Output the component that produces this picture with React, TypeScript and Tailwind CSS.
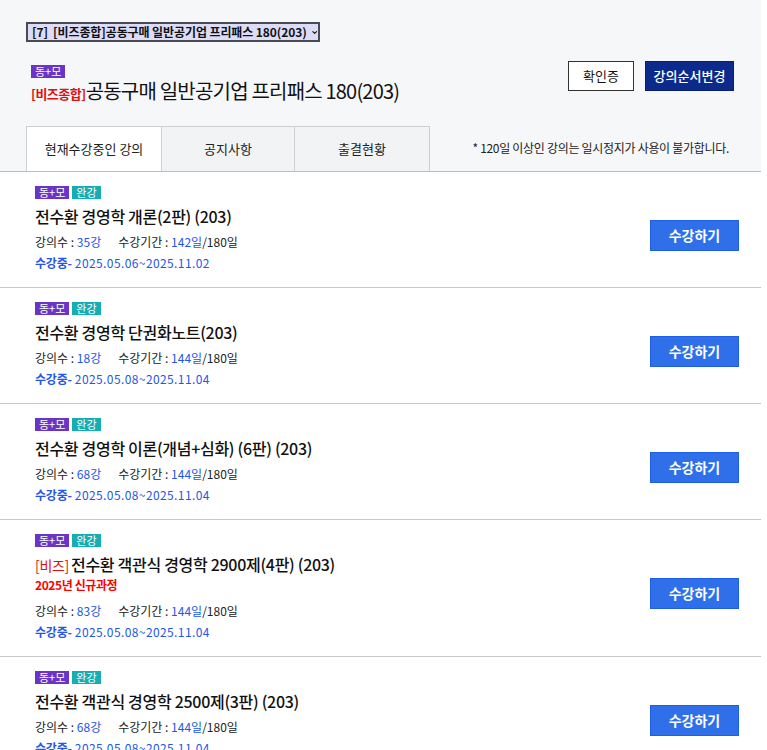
import { ChevronDown } from 'lucide-react'

type Course = {
  prefix?: string
  title: string
  isNew?: boolean
  count: number
  used: number
  start: string
  end: string
}

const COURSES: Course[] = [
  { title: '전수환 경영학 개론(2판) (203)', count: 35, used: 142, start: '2025.05.06', end: '2025.11.02' },
  { title: '전수환 경영학 단권화노트(203)', count: 18, used: 144, start: '2025.05.08', end: '2025.11.04' },
  { title: '전수환 경영학 이론(개념+심화) (6판) (203)', count: 68, used: 144, start: '2025.05.08', end: '2025.11.04' },
  { prefix: '[비즈]', title: '전수환 객관식 경영학 2900제(4판) (203)', isNew: true, count: 83, used: 144, start: '2025.05.08', end: '2025.11.04' },
  { title: '전수환 객관식 경영학 2500제(3판) (203)', count: 68, used: 144, start: '2025.05.08', end: '2025.11.04' },
]

const FONT = "font-['Noto_Sans_CJK_KR','Noto_Sans',sans-serif]"

function Badge({ label, color }: { label: string; color: string }) {
  return (
    <span className={`inline-flex h-[13px] items-center px-[4px] text-[11px] leading-none text-white ${color}`}>
      {label}
    </span>
  )
}

function CourseRow({ course }: { course: Course }) {
  return (
    <div className="flex items-center justify-between border-b border-[#c8c8c8] pl-[35px] pr-[22px] pt-[14px] pb-[15px]">
      <div>
        <div className="flex gap-[3px]">
          <Badge label="동+모" color="bg-[#6a35c6]" />
          <Badge label="완강" color="bg-[#17adb5]" />
        </div>
        <div className="mt-[5px] text-[16px] leading-[24px] font-medium tracking-[-0.3px] text-[#111]">
          {course.prefix && <span className="mr-[2px] text-[14px] font-normal text-[#e01010]">{course.prefix}</span>}
          {course.title}
        </div>
        {course.isNew && (
          <div className="mt-[-1px] text-[12px] leading-[18px] font-bold tracking-[-0.4px] text-[#ff0000]">2025년 신규과정</div>
        )}
        <div className={`${course.isNew ? 'mt-[8px]' : 'mt-[5px]'} flex text-[12px] leading-[18px] text-[#222]`}>
          <span>
            강의수 : <span className="text-[#2456e8]">{course.count}강</span>
          </span>
          <span className="ml-[17px]">
            수강기간 : <span className="text-[#2456e8]">{course.used}일</span>/180일
          </span>
        </div>
        <div className="mt-[3px] text-[12px] leading-[18px] tracking-[0.4px] text-[#2456e8]">
          <span className="font-bold tracking-[-0.2px]">수강중-</span> {course.start}~{course.end}
        </div>
      </div>
      <button className="mt-[12px] h-[31px] w-[89px] border border-[#1d5fe6] bg-[#2f6fe9] text-[14px] font-bold text-white">
        수강하기
      </button>
    </div>
  )
}

export default function App() {
  return (
    <div className={`w-[761px] bg-white ${FONT}`}>
      <div className="border-b border-[#bdbdbd] bg-[#f6f7f9] pl-[26px] pr-[27px] pt-[22px]">
        <div className="flex h-[20px] w-[294px] items-center gap-[4px] border-2 border-[#4a4a55] bg-[#dcdcf7] pl-[4px] text-[12px] font-bold tracking-[-0.1px] text-[#111]">
          <span className="whitespace-nowrap">[7]&nbsp; [비즈종합]공동구매 일반공기업 프리패스 180(203)</span>
          <ChevronDown size={11} strokeWidth={3.5} />
        </div>

        <div className="mt-[23px] flex items-start justify-between">
          <div className="pl-[5px]">
            <div className="flex">
              <Badge label="동+모" color="bg-[#6a35c6]" />
            </div>
            <div className="flex items-baseline">
              <span className="text-[13px] font-semibold tracking-[-0.5px] text-[#e01010]">[비즈종합]</span>
              <span className="text-[20px] leading-[26px] tracking-[-0.8px] text-[#111]">
                공동구매 일반공기업 프리패스 180(203)
              </span>
            </div>
          </div>
          <div className="mt-[-4px] flex gap-[11px]">
            <button className="h-[30px] w-[66px] border border-[#333] bg-white text-[13px] text-[#111]">확인증</button>
            <button className="h-[30px] w-[89px] border border-[#0a1f70] bg-[#0b2a8c] text-[13px] font-medium text-white">
              강의순서변경
            </button>
          </div>
        </div>

        <div className="mt-[22px] flex items-end justify-between">
          <div className="flex">
            <div className="flex h-[45px] w-[136px] items-center justify-center border border-b-0 border-[#cfcfcf] bg-white text-[13px] text-[#222]">
              현재수강중인 강의
            </div>
            <div className="flex h-[45px] w-[133px] items-center justify-center border-y border-r border-b-0 border-[#cfcfcf] bg-[#f2f3f5] text-[13px] text-[#222]">
              공지사항
            </div>
            <div className="flex h-[45px] w-[135px] items-center justify-center border-y border-r border-b-0 border-[#cfcfcf] bg-[#f2f3f5] text-[13px] text-[#222]">
              출결현황
            </div>
          </div>
          <div className="pb-[14px] pr-[5px] text-[12px] tracking-[-0.3px] text-[#222]">
            * 120일 이상인 강의는 일시정지가 사용이 불가합니다.
          </div>
        </div>
      </div>

      {COURSES.map((c) => (
        <CourseRow key={c.title} course={c} />
      ))}
    </div>
  )
}
